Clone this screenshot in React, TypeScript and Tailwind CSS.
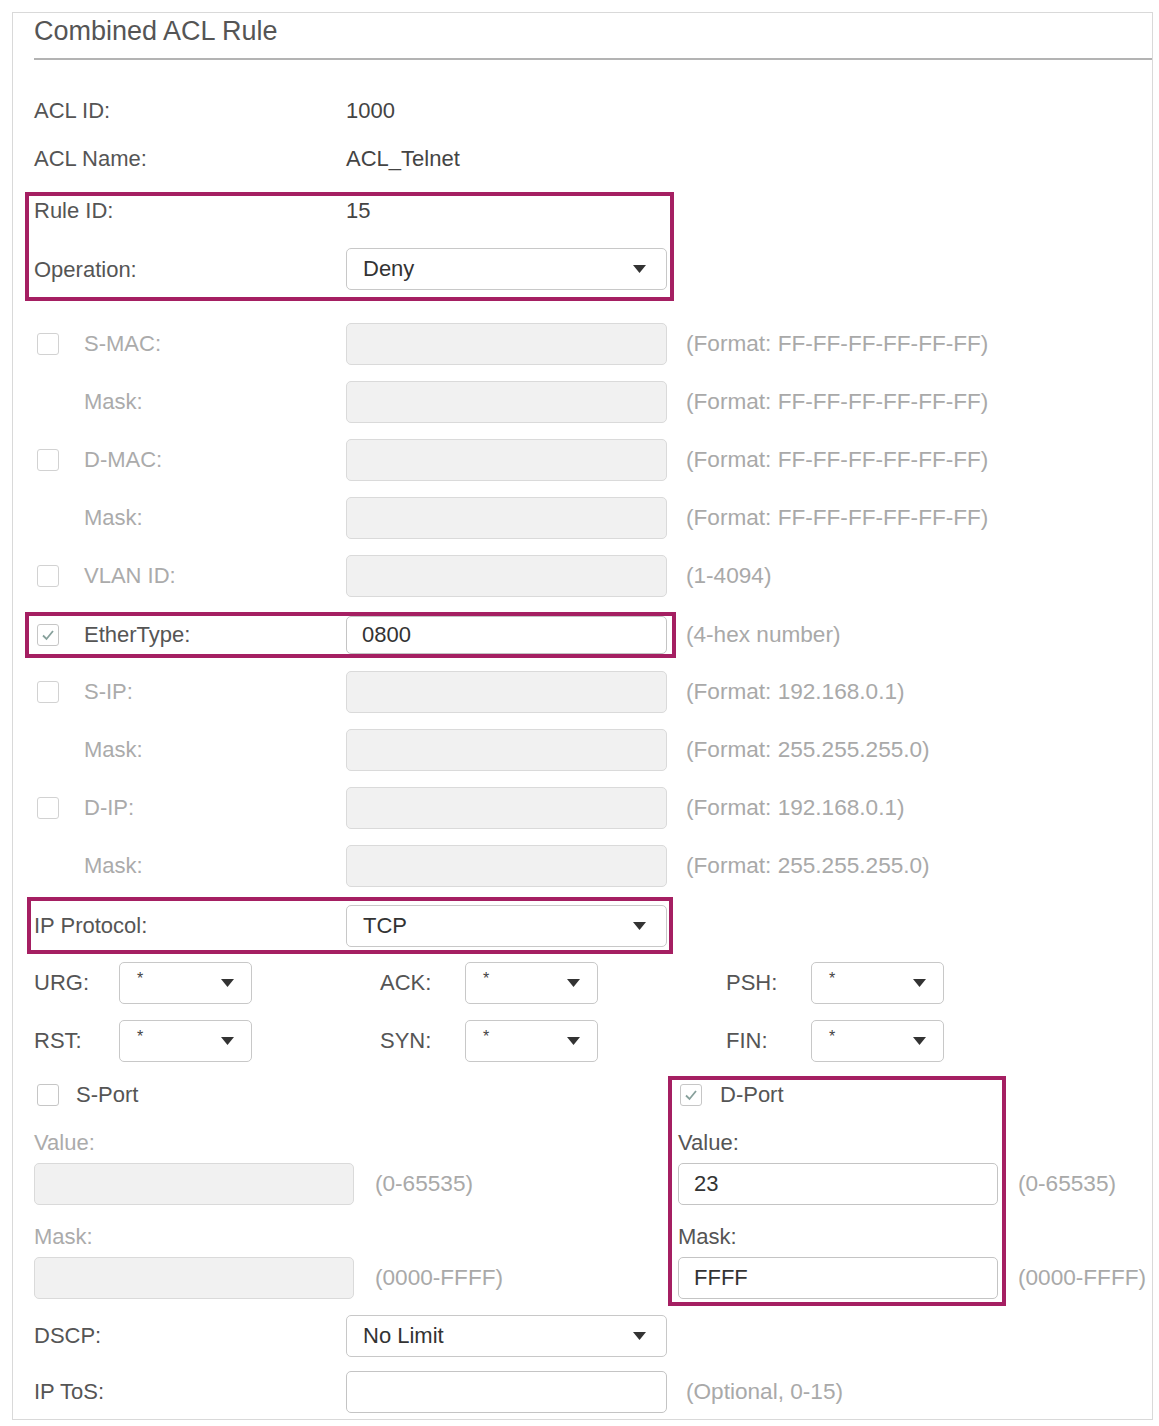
import React from "react";

const PINK = "border-[#a51f62]";

function Arrow() {
  return (
    <svg width="13" height="8" viewBox="0 0 13 8" className="shrink-0">
      <path d="M0 0 H13 L6.5 8 Z" fill="#333" />
    </svg>
  );
}

function Checkbox({ checked = false, muted = false }: { checked?: boolean; muted?: boolean }) {
  return (
    <span
      className={`flex h-[22px] w-[22px] shrink-0 items-center justify-center rounded-[3px] border-[1.5px] bg-white ${
        muted ? "border-[#d2d2d2]" : "border-[#c6c6c6]"
      }`}
    >
      {checked && (
        <svg width="14" height="12" viewBox="0 0 14 12">
          <path d="M2 6.5 L5.5 10 L12 2" stroke="#87a09b" strokeWidth="1.8" fill="none" />
        </svg>
      )}
    </span>
  );
}

function Select({ value, small = false }: { value: string; small?: boolean }) {
  return (
    <div
      className={`flex h-[42px] items-center justify-between rounded-[5px] border border-[#c8c8c8] bg-white ${
        small ? "w-[133px] pl-[17px] pr-[17px]" : "w-[321px] pl-[16px] pr-[20px]"
      }`}
    >
      <span className={small ? "-mt-[8px] text-[16px] text-[#444]" : "text-[22px] text-[#333]"}>{value}</span>
      <Arrow />
    </div>
  );
}

function Input({ value = "", disabled = false, w = "w-[321px]", h = "h-[42px]" }: { value?: string; disabled?: boolean; w?: string; h?: string }) {
  return (
    <div
      className={`flex ${h} ${w} items-center rounded-[5px] border pl-[15px] text-[22px] text-[#333] ${
        disabled ? "border-[#dadada] bg-[#f1f1f1]" : "border-[#c4c4c4] bg-white"
      }`}
    >
      {value}
    </div>
  );
}

function Hint({ children }: { children: React.ReactNode }) {
  return <span className="ml-[19px] text-[22.6px] text-[#a9a9a9]">{children}</span>;
}

// disabled row with optional checkbox
function OffRow({ label, check, hint }: { label: string; check?: boolean; hint: string }) {
  return (
    <div className="flex h-[58px] items-center">
      <div className="flex w-[312px] items-center">
        {check ? (
          <span className="ml-[3px] mr-[25px]">
            <Checkbox muted />
          </span>
        ) : (
          <span className="w-[50px]" />
        )}
        <span className="text-[22px] text-[#ababab]">{label}</span>
      </div>
      <Input disabled />
      <Hint>{hint}</Hint>
    </div>
  );
}

function Flag({ label, last = false }: { label: string; last?: boolean }) {
  return (
    <div className={`flex items-center ${last ? "" : "w-[346px]"}`}>
      <span className="w-[85px] text-[22px] text-[#555]">{label}</span>
      <Select value="*" small />
    </div>
  );
}

export default function App() {
  const mac = "(Format: FF-FF-FF-FF-FF-FF)";
  return (
    <div className="min-h-screen bg-white p-[12px] font-['Liberation_Sans',Arial,sans-serif] text-[22px] leading-none">
      <div className="w-[1141px] border border-[#d9d9d9] pl-[21px]">
        {/* Title */}
        <div className="mt-[2px] border-b-2 border-[#b3b3b3] pb-[11px] text-[27px] leading-[32px] text-[#555]">
          Combined ACL Rule
        </div>

        <div className="mt-[27px] flex h-[48px] items-center">
          <span className="w-[312px] text-[#555]">ACL ID:</span>
          <span className="text-[#444]">1000</span>
        </div>
        <div className="flex h-[48px] items-center">
          <span className="w-[312px] text-[#555]">ACL Name:</span>
          <span className="text-[#444]">ACL_Telnet</span>
        </div>

        {/* Rule ID / Operation */}
        <div className={`-ml-[9px] mt-[9px] h-[109px] w-[649px] border-4 ${PINK} pl-[5px] pb-[6px]`}>
          <div className="flex h-[30px] items-center">
            <span className="w-[312px] text-[#555]">Rule ID:</span>
            <span className="text-[#444]">15</span>
          </div>
          <div className="mt-[22px] flex items-center">
            <span className="w-[312px] text-[#555]">Operation:</span>
            <div className="h-[43px]">
              <Select value="Deny" />
            </div>
          </div>
        </div>

        <div className="mt-[14px]">
          <OffRow label="S-MAC:" check hint={mac} />
          <OffRow label="Mask:" hint={mac} />
          <OffRow label="D-MAC:" check hint={mac} />
          <OffRow label="Mask:" hint={mac} />
          <OffRow label="VLAN ID:" check hint="(1-4094)" />
        </div>

        {/* EtherType */}
        <div className="mb-[5px] mt-[7px] flex items-center">
          <div className={`-ml-[9px] flex h-[46px] w-[651px] items-center border-4 ${PINK}`}>
            <span className="ml-[8px] mr-[25px]">
              <Checkbox checked />
            </span>
            <span className="w-[262px] text-[#555]">EtherType:</span>
            <Input value="0800" h="h-[38px]" />
          </div>
          <span className="ml-[10px] text-[22.6px] text-[#a9a9a9]">(4-hex number)</span>
        </div>

        <OffRow label="S-IP:" check hint="(Format: 192.168.0.1)" />
        <OffRow label="Mask:" hint="(Format: 255.255.255.0)" />
        <OffRow label="D-IP:" check hint="(Format: 192.168.0.1)" />
        <OffRow label="Mask:" hint="(Format: 255.255.255.0)" />

        {/* IP Protocol */}
        <div className={`-ml-[7px] mt-[2px] flex h-[57px] w-[646px] items-center border-4 ${PINK} pl-[3px]`}>
          <span className="w-[312px] text-[#555]">IP Protocol:</span>
          <Select value="TCP" />
        </div>

        <div className="flex h-[58px] items-center">
          <Flag label="URG:" />
          <Flag label="ACK:" />
          <Flag label="PSH:" last />
        </div>
        <div className="flex h-[58px] items-center">
          <Flag label="RST:" />
          <Flag label="SYN:" />
          <Flag label="FIN:" last />
        </div>

        {/* Ports */}
        <div className="flex h-[236px]">
          <div className="w-[634px] pt-[10px]">
            <div className="flex h-[30px] items-center">
              <span className="ml-[3px] mr-[17px]">
                <Checkbox />
              </span>
              <span className="text-[#555]">S-Port</span>
            </div>
            <div className="mt-[18px] flex h-[30px] items-center text-[#ababab]">Value:</div>
            <div className="mt-[5px] flex items-center">
              <Input disabled w="w-[320px]" />
              <span className="ml-[21px] text-[22.6px] text-[#a9a9a9]">(0-65535)</span>
            </div>
            <div className="mt-[17px] flex h-[30px] items-center text-[#ababab]">Mask:</div>
            <div className="mt-[5px] flex items-center">
              <Input disabled w="w-[320px]" />
              <span className="ml-[21px] text-[22.6px] text-[#a9a9a9]">(0000-FFFF)</span>
            </div>
          </div>

          <div className="flex">
            <div className={`mt-[6px] h-[230px] w-[338px] border-4 ${PINK} pl-[6px]`}>
              <div className="flex h-[30px] items-center">
                <span className="ml-[2px] mr-[18px]">
                  <Checkbox checked />
                </span>
                <span className="text-[#555]">D-Port</span>
              </div>
              <div className="mt-[18px] flex h-[30px] items-center text-[#555]">Value:</div>
              <div className="mt-[5px]">
                <Input value="23" w="w-[320px]" />
              </div>
              <div className="mt-[17px] flex h-[30px] items-center text-[#555]">Mask:</div>
              <div className="mt-[5px]">
                <Input value="FFFF" w="w-[320px]" />
              </div>
            </div>
            <div className="ml-[12px] pt-[93px] text-[22.6px] text-[#a9a9a9]">
              <div className="flex h-[42px] items-center">(0-65535)</div>
              <div className="mt-[52px] flex h-[42px] items-center">(0000-FFFF)</div>
            </div>
          </div>
        </div>

        <div className="mt-[1px] flex h-[58px] items-center">
          <span className="w-[312px] text-[#555]">DSCP:</span>
          <Select value="No Limit" />
        </div>
        <div className="flex h-[54px] items-center">
          <span className="w-[312px] text-[#555]">IP ToS:</span>
          <Input />
          <Hint>(Optional, 0-15)</Hint>
        </div>
      </div>
    </div>
  );
}
